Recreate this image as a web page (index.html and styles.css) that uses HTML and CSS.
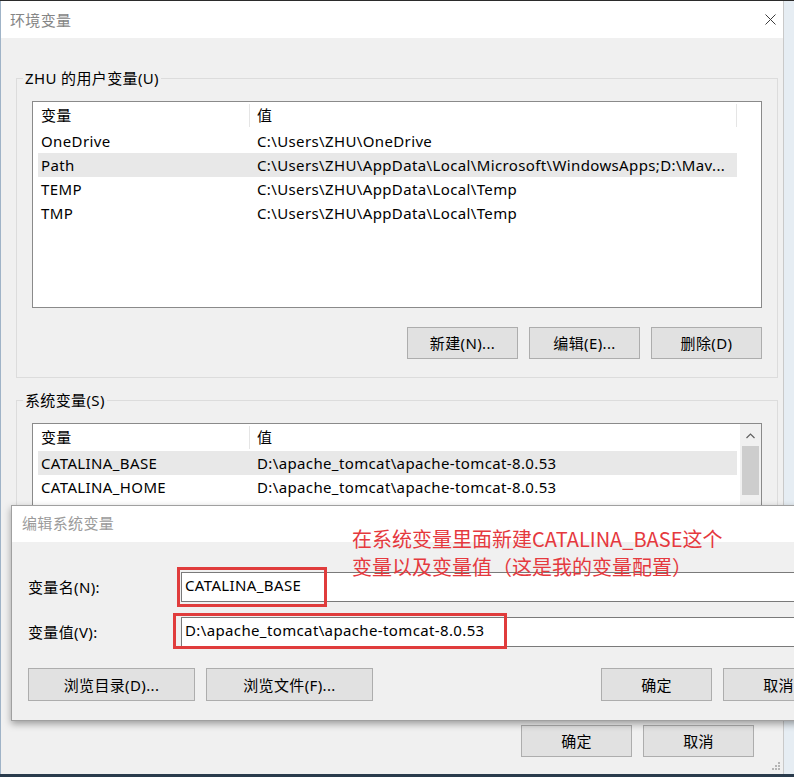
FILE: index.html
```html
<!DOCTYPE html>
<html lang="zh-CN">
<head>
<meta charset="utf-8">
<title>环境变量</title>
<link rel="stylesheet" href="styles.css">
</head>
<body>
<div class="desktop">
  <div class="window">
    <div class="titlebar">
      <span class="title">环境变量</span>
      <svg class="close" width="11" height="11" viewBox="0 0 11 11"><path d="M0.5 0.5L10.5 10.5M10.5 0.5L0.5 10.5" stroke="#3c3c3c" stroke-width="1" fill="none"/></svg>
    </div>
    <div class="content">
      <fieldset class="group group-user">
        <legend>ZHU 的用户变量(U)</legend>
        <div class="listbox">
          <div class="list">
            <div class="row head"><span class="c1">变量</span><span class="c2">值</span></div>
            <div class="row"><span class="c1">OneDrive</span><span class="c2">C:\Users\ZHU\OneDrive</span></div>
            <div class="row sel"><span class="c1">Path</span><span class="c2">C:\Users\ZHU\AppData\Local\Microsoft\WindowsApps;D:\Mav...</span></div>
            <div class="row"><span class="c1">TEMP</span><span class="c2">C:\Users\ZHU\AppData\Local\Temp</span></div>
            <div class="row"><span class="c1">TMP</span><span class="c2">C:\Users\ZHU\AppData\Local\Temp</span></div>
          </div>
        </div>
        <div class="btns">
          <button class="btn">新建(N)...</button>
          <button class="btn">编辑(E)...</button>
          <button class="btn">删除(D)</button>
        </div>
      </fieldset>
      <fieldset class="group group-sys">
        <legend>系统变量(S)</legend>
        <div class="listbox">
          <div class="list">
            <div class="row head nodiv"><span class="c1">变量</span><span class="c2">值</span></div>
            <div class="row sel"><span class="c1">CATALINA_BASE</span><span class="c2">D:\apache_tomcat\apache-tomcat-8.0.53</span></div>
            <div class="row"><span class="c1">CATALINA_HOME</span><span class="c2">D:\apache_tomcat\apache-tomcat-8.0.53</span></div>
          </div>
          <div class="scrollbar">
            <svg class="arrow" width="9" height="6" viewBox="0 0 9 6"><path d="M0.5 5L4.5 1L8.5 5" stroke="#606060" stroke-width="1.2" fill="none"/></svg>
            <div class="thumb"></div>
          </div>
        </div>
      </fieldset>
      <div class="footer">
        <button class="btn">确定</button>
        <button class="btn">取消</button>
      </div>
    </div>
    <svg class="grip" width="10" height="10" viewBox="0 0 10 10"><g fill="#b5b5b5"><rect x="7" y="1" width="2" height="2"/><rect x="4" y="4" width="2" height="2"/><rect x="7" y="4" width="2" height="2"/><rect x="1" y="7" width="2" height="2"/><rect x="4" y="7" width="2" height="2"/><rect x="7" y="7" width="2" height="2"/></g></svg>
  </div>

  <div class="dialog">
    <div class="dlg-title">编辑系统变量</div>
    <div class="dlg-body">
      <div class="field"><span class="label">变量名(N):</span><div class="input">CATALINA_BASE</div></div>
      <div class="field"><span class="label">变量值(V):</span><div class="input">D:\apache_tomcat\apache-tomcat-8.0.53</div></div>
      <div class="dlg-btns">
        <button class="btn wide">浏览目录(D)...</button>
        <button class="btn wide">浏览文件(F)...</button>
        <span class="spacer"></span>
        <button class="btn">确定</button>
        <button class="btn">取消</button>
      </div>
    </div>
    <div class="mark mark-name"></div>
    <div class="mark mark-value"></div>
  </div>

  <div class="note">在系统变量里面新建CATALINA_BASE这个<br>变量以及变量值（这是我的变量配置）</div>
</div>
</body>
</html>
```

FILE: styles.css
```css
* { box-sizing: border-box; }

html, body {
  margin: 0;
  padding: 0;
}

body {
  font-family: "Noto Sans", "Noto Sans CJK SC", sans-serif;
  font-size: 15px;
  letter-spacing: 0.37px;
  color: #000;
  background: #e6edf3;
}

.desktop {
  position: relative;
  width: 794px;
  height: 777px;
  overflow: hidden;
  background: #e6edf3;
  border-top: 1px solid #2b2b2b;
  border-bottom: 3px solid #2a3b4c;
}

.window {
  position: relative;
  width: 784px;
  height: 773px;
  background: #f0f0f0;
  border-left: 1px solid #9fb3c7;
  border-right: 1px solid #c9c9c9;
  display: flex;
  flex-direction: column;
}

.titlebar {
  height: 37px;
  background: #fff;
  display: flex;
  align-items: center;
  justify-content: space-between;
  padding: 0 7px 0 9px;
  flex: none;
}

.title {
  color: #858585;
  font-size: 15px;
  line-height: 20px;
}

.close { display: block; }

.content {
  padding: 0 5px 0 15px;
  display: flex;
  flex-direction: column;
}

.group {
  margin: 0;
  border: 1px solid #dcdcdc;
  padding: 13px 15px 18px 15px;
  min-width: 0;
}

.group legend {
  padding: 0 2px;
  margin-left: -9px;
  line-height: 20px;
  font-size: 15px;
}

.group-user { margin-top: 30px; }

.group-sys {
  margin-top: 12px;
  padding-top: 13px;
  padding-bottom: 69px;
}

.listbox {
  height: 207px;
  border: 1px solid #8a8a8a;
  background: #fff;
  display: flex;
}

.list {
  flex: 1;
  min-width: 0;
  overflow: hidden;
}

.row {
  display: flex;
  align-items: center;
  height: 24px;
  width: 699px;
  margin-left: 5px;
  white-space: nowrap;
}

.row.head { height: 27px; }

.row .c1 {
  width: 212px;
  flex: none;
  padding-left: 3px;
  overflow: hidden;
}

.row .c2 {
  flex: 1;
  min-width: 0;
  padding-left: 7px;
  overflow: hidden;
}

.row.head .c1,
.row.head .c2 {
  height: 23px;
  line-height: 23px;
  border-right: 1px solid #e5e5e5;
}

.row.head.nodiv .c2 { border-right: none; }

.row.sel { background: #e8e8e8; }

.scrollbar {
  width: 21px;
  flex: none;
  background: #f0f0f0;
  display: flex;
  flex-direction: column;
  align-items: center;
}

.arrow {
  margin-top: 9px;
  margin-bottom: 7px;
  display: block;
}

.thumb {
  width: 17px;
  height: 49px;
  background: #cdcdcd;
}

.btns {
  display: flex;
  justify-content: flex-end;
  gap: 11px;
  margin-top: 19px;
}

.btn {
  width: 111px;
  height: 32px;
  background: #e1e1e1;
  border: 1px solid #adadad;
  border-radius: 0;
  font-family: "Noto Sans", "Noto Sans CJK SC", sans-serif;
  font-size: 15px;
  letter-spacing: 0.37px;
  color: #000;
  padding: 0;
  line-height: 30px;
}

.footer {
  display: flex;
  justify-content: flex-end;
  gap: 11px;
  margin-top: 25px;
  padding-right: 24px;
}

.grip {
  position: absolute;
  right: 2px;
  bottom: 3px;
}

/* edit dialog */
.dialog {
  position: absolute;
  left: 11px;
  top: 504px;
  width: 840px;
  height: 216px;
  border: 1px solid #a0a0a0;
  background: #f0f0f0;
  box-shadow: 0 3px 7px rgba(0, 0, 0, 0.35);
}

.dlg-title {
  height: 36px;
  line-height: 35px;
  background: #fff;
  color: #9b9b9b;
  padding-left: 10px;
}

.dlg-body {
  padding: 30px 16px 0 16px;
}

.field {
  display: flex;
  align-items: center;
  height: 30px;
}

.field + .field { margin-top: 15px; }

.field .label {
  width: 153px;
  flex: none;
  line-height: 26px;
}

.input {
  flex: 1;
  height: 30px;
  line-height: 25px;
  border: 1px solid #7a7a7a;
  background: #fff;
  padding-left: 3px;
  white-space: nowrap;
}

.dlg-btns {
  display: flex;
  gap: 11px;
  margin-top: 21px;
}

.dlg-btns .btn { height: 33px; }

.btn.wide { width: 167px; }

.spacer { flex: 1; }

.mark {
  position: absolute;
  border: 3px solid #e03c3c;
}

.mark-name {
  left: 165px;
  top: 61px;
  width: 150px;
  height: 40px;
}

.mark-value {
  left: 161px;
  top: 107px;
  width: 334px;
  height: 36px;
}

.note {
  position: absolute;
  left: 352px;
  top: 524px;
  font-family: "Noto Sans CJK SC", sans-serif;
  font-size: 20px;
  letter-spacing: 0;
  line-height: 28px;
  color: #e5393e;
  white-space: nowrap;
}
```
